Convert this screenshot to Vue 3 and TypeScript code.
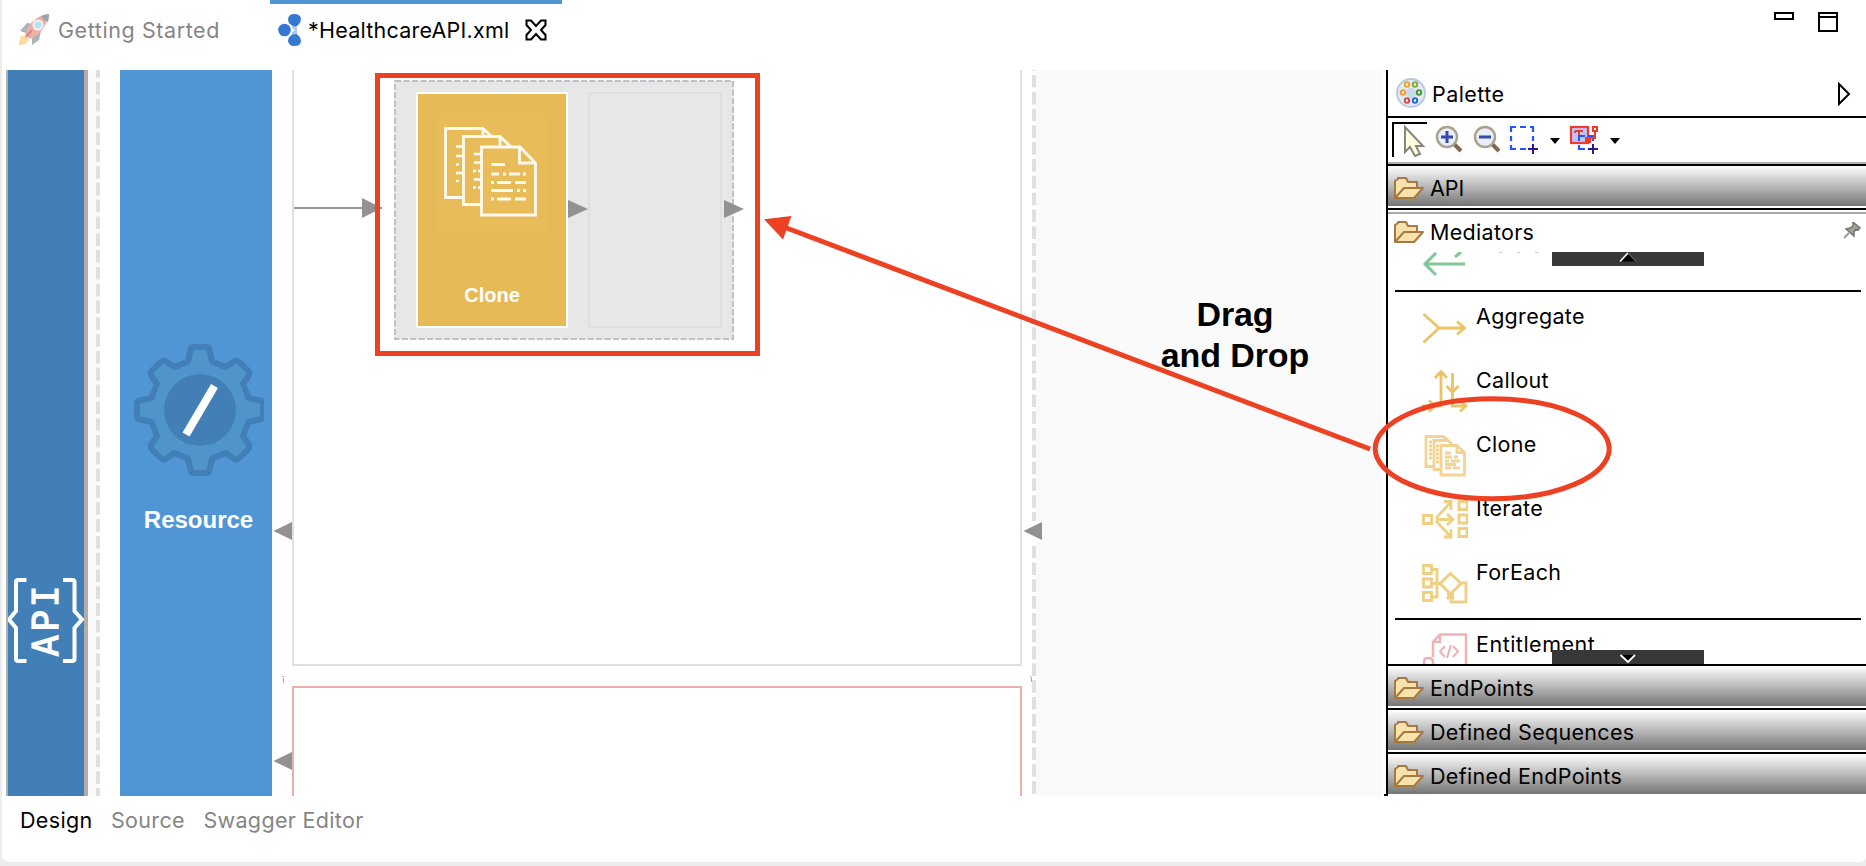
<script setup lang="ts">
interface PaletteTool {
  label: string
  stroke: string
  paths: string[]
}

const tools: PaletteTool[] = [
  {
    label: 'Aggregate',
    stroke: '#ecc468',
    paths: ['M1.5 8 L17 22 M1.5 36.500 L17 22 M17 22 H42 M35 15.500 L42.500 22 L35 28.500'],
  },
  {
    label: 'Callout',
    stroke: '#ecc468',
    paths: [
      'M19 33 V2 M13 8 L19 1.5 L25 8 M30.500 3 V34 M24.500 16 L30.500 22 L36.500 16',
      'M0 36 H19 V31 M7 30.500 L13 36 L7 41.500 M30.500 31 V36 H45 M38 30.500 L44 36 L38 41.500',
    ],
  },
  {
    label: 'Clone',
    stroke: '#f2d392',
    paths: [
      'M11 32.500 H4 V2.500 H21 L26 6 M18 35.500 H12 V6.500 H26 L30 10',
      'M19 11.500 H35 L42.500 18.500 V41 H19 Z M35 11.500 V18.500 H42',
      'M7 8 H10 M7 12 H10 M7 16 H10 M7 20 H10 M7 24 H10 M14 12 H17 M14 16 H17 M14 20 H17 M14 24 H17 M14 28 H17',
      'M23 19 H29 M23 23 H30 M32 23 H36 M23 27 H27 M29 27 H38 M23 30.500 H34 M23 34 H29 M31 34 H38',
    ],
  },
  {
    label: 'Iterate',
    stroke: '#efcf82',
    paths: [
      'M1.500 17.500 h8 v8 h-8 z M37 3.500 h8 v8 h-8 z M37 17 h8 v8 h-8 z M37 30.500 h8 v8 h-8 z',
      'M14 20 L29 4 M22 3.500 H29 V12 M14 21.500 H31 M25 16 L31 21.500 L25 27 M14 23 L29 39 M29 31 V39 H22',
    ],
  },
  {
    label: 'ForEach',
    stroke: '#efcf82',
    paths: [
      'M1.500 3.500 h8 v8 h-8 z M1.500 17 h8 v8 h-8 z M1.500 30.500 h8 v8 h-8 z',
      'M10 7.500 H15 V35 H10 M10 21.500 H18 L28.500 11.500 L39 21.500 L28.500 32 L18 21.500 M39 21 H44 V40 H29 V34 M25 32 H32 M25 37 L28.500 33 L32 37',
    ],
  },
]

const drawers: string[] = ['EndPoints', 'Defined Sequences', 'Defined EndPoints']
const dots = [
  { x: 11, y: 6.5, c: '#f0a22c' },
  { x: 19, y: 6.5, c: '#7dad35' },
  { x: 7, y: 14.5, c: '#ef9a35' },
  { x: 23, y: 14.5, c: '#45982f' },
  { x: 11, y: 22.5, c: '#cf4d4d' },
  { x: 19, y: 22.5, c: '#2d68d8' },
]
</script>

<template>
  <div class="window">
    <header class="tabs">
      <div class="tab muted">
        <svg class="rocket" width="32" height="32" viewBox="0 0 32 32">
          <path d="M3 17 L10 9 L17 10 L9 19 Z M15 24 L24 17 L22 26 L15 31 Z" fill="#a9b4bd" />
          <path d="M4 22 C2 26 2 29 2 31 C6 31 10 30 12 26 L9 21 Z" fill="#fbdca0" />
          <path d="M8 20 C12 9 19 2 31 0 C30 12 24 20 13 25 Z" fill="#f3ada2" />
          <path d="M24 2 Q28 0 32 0 Q32 4 31 8 Q26 6 24 2 Z" fill="#98a4ae" />
          <circle cx="21" cy="11" r="4.500" fill="#b7e0f3" stroke="#eef5f8" stroke-width="2" />
          <path d="M9 23 L15 16" stroke="#c98a8a" stroke-width="2" />
        </svg>
        <span class="t-start">Getting Started</span>
      </div>
      <div class="tab active">
        <svg width="23" height="32" viewBox="0 0 23 32">
          <path d="M14 14 Q19 16 14 18 Z M11 7 L14 12 V20 L11 25 H22 L19 20 V12 L22 7 Z" fill="#aecbee" />
          <circle cx="6.500" cy="16" r="6.300" fill="#3478d2" />
          <path d="M10 5 Q11 0 16 0 Q23 0 23 5.500 Q22 11 17.500 12.500 Q10 11 10 5 Z M10 27 Q11 32 16 32 Q23 32 23 26.500 Q22 21 17.500 20 Q10 21 10 27 Z" fill="#3478d2" />
        </svg>
        <span class="t-file">*HealthcareAPI.xml</span>
        <svg class="close" width="22" height="22" viewBox="0 0 22 22" fill="none" stroke="#000" stroke-width="2">
          <path d="M1.500 1.500 H6 L11 7 L16 1.500 H20.500 V6 L16 11 L20.500 16 V20.500 H16 L11 15 L6 20.500 H1.500 V16 L6 11 L1.500 6 Z" />
        </svg>
      </div>
      <div class="window-buttons">
        <i class="minimize"></i>
        <i class="maximize"></i>
      </div>
    </header>

    <main class="workspace">
      <section class="canvas">
        <div class="api-rail">
          <svg width="76" height="86" viewBox="0 0 76 86">
            <path d="M18.500 3 H10 Q8 3 8 5 V34 L1 42.500 L8 51 V82 Q8 84 10 84 H18.500 M55 3 H64 Q66.500 3 66.500 5 V34 L74 42.500 L66.500 51 V82 Q66.500 84 64 84 H55" fill="none" stroke="#fff" stroke-width="4" />
            <text class="api-glyph" transform="translate(50 79.500) rotate(-90)">API</text>
          </svg>
        </div>
        <svg class="dashes left-dashes" width="12" height="726"><rect width="8" height="726" fill="#fafafa" /><rect x="8" width="4" height="726" fill="#fafafa" /><path d="M10 -4.800 V726" stroke="#e0e0e0" stroke-width="4" stroke-dasharray="12.600 4.210" /></svg>

        <div class="resource">
          <svg width="122" height="134" viewBox="-66 -67 132 134" preserveAspectRatio="xMinYMid slice" class="gear">
            <path d="M-12 -48.500 L-9.500 -60 Q-9 -63 -6 -63 H6 Q9 -63 9.500 -60 L12 -48.500 L26 -43 L34 -48.500 Q37 -50.500 40 -47.500 L47.500 -40 Q50.500 -37 48.500 -34 L43 -26 L48.500 -12 L60 -9.500 Q63 -9 63 -6 V6 Q63 9 60 9.500 L48.500 12 L43 26 L48.500 34 Q50.500 37 47.500 40 L40 47.500 Q37 50.500 34 48.500 L26 43 L12 48.500 L9.500 60 Q9 63 6 63 H-6 Q-9 63 -9.500 60 L-12 48.500 L-26 43 L-34 48.500 Q-37 50.500 -40 47.500 L-47.500 40 Q-50.500 37 -48.500 34 L-43 26 L-48.500 12 L-60 9.500 Q-63 9 -63 6 V-6 Q-63 -9 -60 -9.500 L-48.500 -12 L-43 -26 L-48.500 -34 Q-50.500 -37 -47.500 -40 L-40 -47.500 Q-37 -50.500 -34 -48.500 L-26 -43 Z" fill="#4f95cc" stroke="#427fb8" stroke-width="6" stroke-linejoin="round" />
            <circle r="36" fill="#427fb6" />
            <path d="M14.500 -24 L-14 24.500" stroke="#fff" stroke-width="8" />
          </svg>
          <span>Resource</span>
        </div>

        <div class="sequences">
          <div class="frame main-frame">
            <svg class="inflow" width="90" height="20" viewBox="0 0 90 20">
              <path d="M0 10 H88" stroke="#979797" stroke-width="2" /><path d="M68 0 L88 10 L68 20 Z" fill="#929291" />
            </svg>
            <div class="clone-group">
              <svg class="group-border" width="340" height="260"><rect x="1" y="1" width="338" height="258" fill="#e7e7e7" stroke="#bcc2c6" stroke-width="2" stroke-dasharray="6.300 2.150" /></svg>
              <div class="clone-card">
                <svg width="108" height="118" viewBox="0 0 108 118" fill="none" stroke="#fffaf0" stroke-width="2.800">
                  <rect width="108" height="118" fill="#e8bd59" stroke="none" />
                  <path d="M25 83.500 H7.500 V14.500 H45 L53 22 M45 14.500 V22 M43 90.500 H25.500 V22.500 H62 L73 33 M62 22.500 V32" />
                  <path d="M43.500 33 H82 L97.500 49 V101 H43.500 Z M81.500 33 V49 H97.500" />
                  <g stroke-width="2.600">
                    <path d="M18 32.500 H25 M18 42 H25 M18 50.500 h3 M18 59 H25 M18 67 h3 M36 40 H43 M36 48.500 H43 M35 57 h3 m2 0 h3 M36 65.500 H43 M35 73.500 h3 m2 0 h3" />
                    <path d="M53.500 50.500 H67 M53.500 60 H61 M65 60 h3 M71 60 H82 M85 60 h3 M53 68.500 h3 M59 68.500 H73 M77 68.500 H88 M53.500 76.500 H75 M79 76.500 h3 M85 76.500 h3 M53 85 h3 M59 85 H73 M77 85 H88" stroke-width="3" />
                  </g>
                </svg>
                <span>Clone</span>
              </div>
              <svg class="flow-arrow" width="20" height="18"><path d="M0 0 L20 9 L0 18 Z" fill="#929291" /></svg>
              <div class="drop-slot"></div>
              <svg class="flow-arrow out" width="20" height="18"><path d="M0 0 L20 9 L0 18 Z" fill="#929291" /></svg>
            </div>
          </div>
          <div class="frame fault-frame"></div>
        </div>

        <svg class="dashes right-dashes" width="4" height="726"><rect width="4" height="726" fill="#fff" /><path d="M2 -11.800 V726" stroke="#e0e0e0" stroke-width="4" stroke-dasharray="12.600 4.210" /></svg>
        <div class="margin-area"><p>Drag<br />and Drop</p></div>

        <svg class="connectors" width="1866" height="726" viewBox="0 70 1866 726">
          <rect x="1024" y="521" width="18" height="21" fill="#fff" />
          <path d="M273.500 531 L292 522 V540 Z M273.500 761 L292 752 V770 Z M1023.500 531 L1042 522 V540 Z" fill="#929291" />
          <path d="M282 676.500 h2 M283.500 678 v5 M1030 677 h2 M1031.500 678 v4" stroke="#aaa" stroke-width="1" />
          <path d="M1384 795 h3" stroke="#000" stroke-width="2" />
        </svg>
      </section>

      <aside class="palette">
        <div class="palette-title">
          <svg class="palette-icon" width="30" height="30" viewBox="0 0 30 30">
            <circle cx="15" cy="15" r="14" fill="#e2eaf4" stroke="#b7c9e3" stroke-width="2" />
            <circle cx="15" cy="15" r="5" fill="#cbdaea" />
            <circle v-for="d in dots" :key="d.c" :cx="d.x" :cy="d.y" r="2.200" fill="#fff" :stroke="d.c" stroke-width="2" />
          </svg>
          <span>Palette</span>
          <svg class="expand" width="14" height="24" viewBox="0 0 14 24"><path d="M2 2 L12 12 L2 22 Z" fill="none" stroke="#000" stroke-width="2" /></svg>
        </div>
        <div class="toolbar">
          <svg width="240" height="36" viewBox="0 0 240 36">
            <path d="M1 35 V1 H35" fill="none" stroke="#000" stroke-width="2" />
            <path d="M13 5 V30 L18 25 L23 34 L28 32 L24 24 H31 Z" fill="#fffee0" stroke="#88867c" stroke-width="2" />
            <g fill="none">
              <path d="M62 22 L69 29 M100 22 L107 29" stroke="#856650" stroke-width="4" />
              <circle cx="55" cy="15" r="10" fill="#e7effa" stroke="#aaa28b" stroke-width="2.400" />
              <circle cx="93" cy="15" r="10" fill="#e7effa" stroke="#aaa28b" stroke-width="2.400" />
              <path d="M49 15 H61 M55 9 V21 M87 15 H99" stroke="#3548ad" stroke-width="3" />
              <path d="M119 10 V5 H124 M128 5 H134 M138 5 H141 V10 M119 14 V19 M141 14 V19 M119 23 V27 H124 M128 27 H134" stroke="#2454ff" stroke-width="2.200" />
              <path d="M136 27 H146 M141 22 V32 M196 27 H206 M201 22 V32" stroke="#2b1990" stroke-width="2" />
              <path d="M187 23 V27 H193 M201 14 V19" stroke="#2454ff" stroke-width="2.200" />
              <rect x="179" y="5" width="17" height="16" fill="#bac6fa" stroke="#ef3a2e" stroke-width="2.200" />
              <path d="M183 9 V11 M183 9 H191 M187 9 V15" stroke="#ef3a2e" stroke-width="2" />
              <path d="M187 19 V14 H193 M196 14 H202" stroke="#2454ff" stroke-width="2" />
              <path d="M201 5 h4 v4 h-4 z M203 10 V16 H199 M194 16 h4 v4 h-4 z" stroke="#ef3a2e" stroke-width="2" />
            </g>
            <path d="M158 16 H168 L163 22 Z M218 16 H228 L223 22 Z" fill="#000" />
          </svg>
        </div>

        <div class="drawer first">
          <svg class="folder" width="30" height="22" viewBox="0 0 30 22"><path d="M1 21 V4 L4 2 V1 H12 L14 5 H23 V10 M1 21 L10 11 H29 L20 21 Z" fill="#f8e3ad" stroke="#a87840" stroke-width="2" stroke-linejoin="round" /></svg>
          <span class="api">API</span>
        </div>

        <div class="drawer open">
          <svg class="folder" width="30" height="22" viewBox="0 0 30 22"><path d="M1 21 V4 L4 2 V1 H12 L14 5 H23 V10 M1 21 L10 11 H29 L20 21 Z" fill="#f8e3ad" stroke="#a87840" stroke-width="2" stroke-linejoin="round" /></svg>
          <span>Mediators</span>
          <svg class="pin" width="17" height="17" viewBox="0 0 17 17"><path d="M0 16 L5 11" stroke="#999" stroke-width="2" /><path d="M9 0 L16 6 L14 8 L12 7 L10 10 L10 14 L2 7 L6 6 L9 4 Z" fill="#a5a293" stroke="#777" stroke-width="1.500" /></svg>
        </div>

        <div class="tool-list">
          <div class="prev-item">
            <svg width="46" height="26" viewBox="0 0 46 26" fill="none" stroke="#82c797" stroke-width="3"><path d="M2 12 H43 M14 1 L3 12 L14 23 M33 5 L39 0" /></svg>
            <i class="clipped-text"></i>
          </div>
          <div class="group-rule"></div>
          <div class="tool-group">
            <div v-for="t in tools" :key="t.label" class="tool">
              <svg width="46" height="44" viewBox="0 0 46 44" fill="none" :stroke="t.stroke" stroke-width="2.800">
                <path v-for="p in t.paths" :key="p" :d="p" />
              </svg>
              <span :class="t.label.toLowerCase()">{{ t.label }}</span>
            </div>
          </div>
          <div class="group-rule"></div>
          <div class="tool last">
            <svg width="46" height="44" viewBox="0 0 46 44" fill="none" stroke="#efb2b2" stroke-width="2.500"><path d="M11 25 V10 L18 2.500 H44 V44 M11 10 H18 V2.500 M2 33 V30 Q2 26 6 26 Q11 26 11 30 V33" /><path d="M23 14 L18 19.500 L23 25 M31 14 L36 19.500 L31 25 M29 13 L25 26" stroke-width="2" /></svg>
            <span class="entitlement">Entitlement</span>
          </div>
          <div class="scroller up"><svg width="18" height="10" viewBox="0 0 18 10"><path d="M1 9.500 L9 1.500 L17 9.500 Z" fill="#000" /><path d="M1 9.500 L9 1" stroke="#fff" stroke-width="1.600" /><path d="M9 1 L17 9.500" stroke="#888" /></svg></div>
          <div class="scroller down"><svg width="18" height="10" viewBox="0 0 18 10"><path d="M2 1 H16 L9 8 Z" fill="#000" /><path d="M1.500 1 L9 8 L16 1" fill="none" stroke="#fff" stroke-width="1.800" /></svg></div>
        </div>

        <div v-for="(d, i) in drawers" :key="d" class="drawer">
          <svg class="folder" width="30" height="22" viewBox="0 0 30 22"><path d="M1 21 V4 L4 2 V1 H12 L14 5 H23 V10 M1 21 L10 11 H29 L20 21 Z" fill="#f8e3ad" stroke="#a87840" stroke-width="2" stroke-linejoin="round" /></svg>
          <span :class="'drawer-' + i">{{ d }}</span>
        </div>
      </aside>
    </main>

    <footer class="views">
      <span class="v-design">Design</span>
      <span class="v-source">Source</span>
      <span class="v-swagger">Swagger Editor</span>
    </footer>

    <svg class="annotation" width="1866" height="866" viewBox="0 0 1866 866" fill="none" stroke="#ed4124" stroke-width="5">
      <rect x="377.500" y="75.500" width="380" height="278" />
      <path d="M784 227 L1370 449" />
      <path d="M764 219.300 L791.500 216 L783 239.500 Z" fill="#ed4124" stroke="none" />
      <ellipse cx="1492.200" cy="448.800" rx="117" ry="50" />
    </svg>
  </div>
</template>

<style>
html,
body {
  margin: 0;
  background: #ececec;
}
</style>

<style scoped>
.window {
  position: relative;
  box-sizing: border-box;
  width: 1866px;
  height: 866px;
  overflow: hidden;
  display: flex;
  flex-direction: column;
  background: #fff;
  border-left: 2px solid #ececec;
  border-bottom: 4px solid #ececec;
  border-radius: 0 0 8px 10px;
  font-family: Inter, "Liberation Sans", sans-serif;
  font-size: 21.500px;
  letter-spacing: 0.3px;
  color: #000;
}
svg {
  display: block;
  flex: none;
}
span {
  white-space: nowrap;
}
.tabs {
  height: 70px;
  flex: none;
  display: flex;
}
.tab {
  box-sizing: border-box;
  height: 60px;
  display: flex;
  align-items: center;
}
.muted {
  width: 268px;
  padding-left: 15px;
  gap: 9px;
  color: #858585;
}
.t-start {
  letter-spacing: 0.58px;
}
.active {
  width: 292px;
  padding-left: 8px;
  border-top: 4px solid #5096d5;
  padding-bottom: 4px;
}
.t-file {
  margin-left: 7px;
  width: 202px;
  letter-spacing: 0.23px;
}
.close {
  margin-left: 15px;
}
.window-buttons {
  margin-left: auto;
  margin-right: 28px;
  padding-top: 12px;
  display: flex;
  gap: 24px;
}
.minimize {
  box-sizing: border-box;
  width: 20px;
  height: 8px;
  border: 2px solid #000;
}
.maximize {
  box-sizing: border-box;
  width: 20px;
  height: 20px;
  border: 2px solid #000;
  background: linear-gradient(#fff 2px, #000 2px, #000 4px, #fff 4px);
}
.workspace {
  height: 726px;
  flex: none;
  display: flex;
}
.canvas {
  position: relative;
  width: 1384px;
  display: flex;
}
.api-rail {
  box-sizing: border-box;
  width: 82px;
  margin-left: 4px;
  border-left: 2px solid #afafaf;
  border-right: 4px solid #b1aeac;
  background: #427fb6;
  padding-top: 507px;
}
.api-glyph {
  font-family: "DejaVu Sans Mono", monospace;
  font-size: 36px;
  letter-spacing: 3px;
  fill: #fff;
  stroke: #fff;
  stroke-width: 1.2px;
}
.resource {
  width: 152px;
  margin: 0 20px;
  background: #5096d5;
  display: flex;
  flex-direction: column;
  align-items: center;
  color: #fff;
  letter-spacing: 0;
  font: bold 24px "Liberation Sans", Arial, sans-serif;
}
.gear {
  width: 130px;
  margin: 273px 0 0 14px;
  align-self: flex-start;
}
.resource span {
  margin-top: 29px;
  line-height: 28px;
  margin-left: 5px;
}
.sequences {
  width: 730px;
  display: flex;
  flex-direction: column;
  gap: 20px;
}
.frame {
  box-sizing: border-box;
  border: 2px solid #e0e0e0;
}
.main-frame {
  height: 596px;
  border-top: 0;
  display: flex;
  align-items: flex-start;
}
.fault-frame {
  height: 110px;
  border-color: #ecb0aa;
  border-bottom: 0;
}
.inflow {
  margin-top: 128px;
}
.clone-group {
  position: relative;
  width: 340px;
  height: 260px;
  box-sizing: border-box;
  margin: 10px 0 0 10px;
  padding: 12px 0 0 22px;
  display: flex;
}
.group-border {
  position: absolute;
  inset: 0;
}
.clone-card {
  position: relative;
  flex: none;
  box-sizing: border-box;
  width: 152px;
  height: 236px;
  padding-top: 20px;
  border: 2px solid #fff;
  background: #e6bb57;
  display: flex;
  flex-direction: column;
  align-items: center;
  color: #fff;
  letter-spacing: 0;
  font: bold 20px "Liberation Sans", Arial, sans-serif;
}
.clone-card span {
  margin-top: 51px;
  line-height: 24px;
}
.flow-arrow {
  position: relative;
  margin-top: 108px;
}
.drop-slot {
  position: relative;
  flex: none;
  box-sizing: border-box;
  width: 134px;
  height: 236px;
  border: 2px solid #dfdfdf;
}
.out {
  margin-left: 2px;
}
.right-dashes {
  margin-left: 10px;
}
.margin-area {
  width: 346px;
  background: #fafafa;
}
.margin-area p {
  margin: 224px 0 0 26px;
  width: 346px;
  text-align: center;
  letter-spacing: -0.1px;
  font: bold 34px/41px "Liberation Sans", Arial, sans-serif;
}
.connectors {
  position: absolute;
  left: -2px;
  top: 0;
}
.palette {
  box-sizing: border-box;
  width: 480px;
  border-left: 2px solid #000;
  display: flex;
  flex-direction: column;
}
.palette-title {
  box-sizing: border-box;
  height: 48px;
  display: flex;
  align-items: center;
  padding: 2px 15px 0 8px;
  border-bottom: 2px solid #000;
  gap: 6px;
}
.palette-title span {
  letter-spacing: 0.45px;
}
.palette-icon {
  margin-top: -2px;
}
.expand {
  margin-left: auto;
}
.toolbar {
  height: 44px;
  padding: 4px 0 0 4px;
  background: linear-gradient(#b0b0b0 2px, #000 2px) 0 100% / 100% 4px no-repeat;
}
.drawer {
  box-sizing: border-box;
  height: 42px;
  flex: none;
  display: flex;
  align-items: center;
  gap: 6px;
  padding: 2px 5px 0 6px;
  background: linear-gradient(#fff, #757575) 0 0 / 100% 40px no-repeat;
}
.api {
  letter-spacing: 0;
}
.drawer ~ .drawer {
  height: 44px;
  border-top: 2px solid #000;
}
.drawer ~ .drawer.open {
  height: 44px;
  background: linear-gradient(#fff 2px, #aaa 2px, #aaa 4px, #fff 4px);
}
.pin {
  margin: -4px 0 0 auto;
}
.tool-list {
  position: relative;
  height: 412px;
  flex: none;
  overflow: hidden;
}
.prev-item {
  height: 38px;
  padding-left: 34px;
  display: flex;
}
.clipped-text {
  margin-left: 31px;
  width: 42px;
  height: 1px;
  background: repeating-linear-gradient(90deg, #ccc 0 3px, transparent 3px 18px);
}
.group-rule {
  height: 2px;
  margin: 0 5px 0 7px;
  background: #000;
}
.tool-group {
  height: 326px;
  padding-top: 8px;
  box-sizing: border-box;
}
.tool {
  display: flex;
  height: 64px;
  padding-left: 34px;
  gap: 8px;
}
.tool svg {
  margin-top: 6px;
}
.tool span {
  line-height: 32px;
}
.last {
  padding-top: 8px;
}
.last svg {
  margin-top: 4px;
}
.tool .entitlement {
  letter-spacing: 0.5px;
}
.scroller {
  position: absolute;
  left: 164px;
  width: 152px;
  height: 14px;
  background: #383838;
  display: flex;
  justify-content: center;
}
.up {
  top: 0;
}
.down {
  bottom: 0;
  padding-top: 4px;
  box-sizing: border-box;
}
.views {
  display: flex;
  padding: 6px 0 0 18px;
  gap: 18.500px;
  line-height: 36px;
  letter-spacing: 0.33px;
  color: #858585;
}
.v-design {
  color: #000;
}
.annotation {
  position: absolute;
  left: -2px;
  top: 0;
}
</style>
